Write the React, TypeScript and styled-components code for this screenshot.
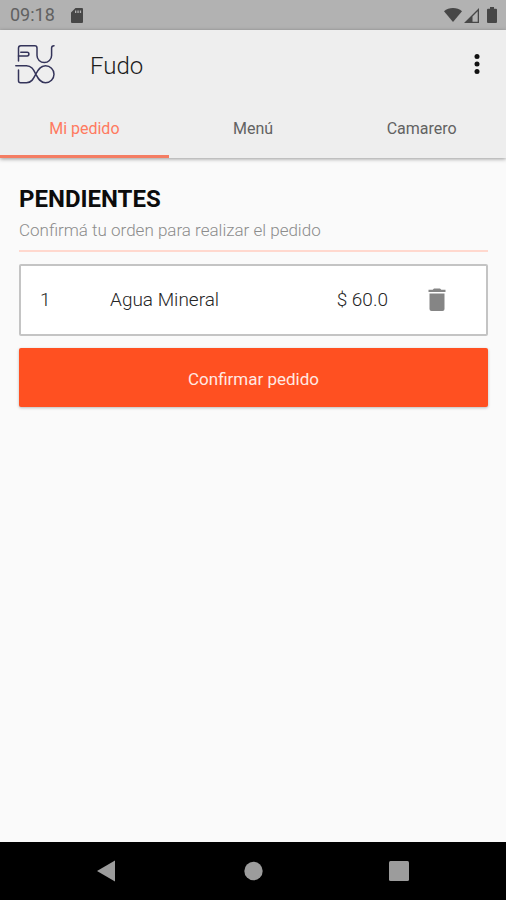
import React from 'react';
import styled, { createGlobalStyle, css } from 'styled-components';

type Tab = {
  id: string;
  label: string;
};

type OrderItem = {
  quantity: number;
  name: string;
  price: string;
};

const tabs: Tab[] = [
  { id: 'pedido', label: 'Mi pedido' },
  { id: 'menu', label: 'Menú' },
  { id: 'camarero', label: 'Camarero' },
];

const pendingItems: OrderItem[] = [
  { quantity: 1, name: 'Agua Mineral', price: '$ 60.0' },
];

// Icons
function SdCardIcon() {
  return (
    <svg width="12" height="15" viewBox="0 0 12 15" aria-hidden="true">
      <path
        fillRule="evenodd"
        fill="#474747"
        d="M4.5 0H11a1 1 0 0 1 1 1v13a1 1 0 0 1-1 1H1a1 1 0 0 1-1-1V4.5zM4 2.500v2.500h1.300v-2.500zM6.400 2.500v2.500h1.300v-2.500zM8.800 2.500v2.500h1.300v-2.500z"
      />
    </svg>
  );
}

function WifiIcon() {
  return (
    <svg width="18" height="14" viewBox="0 0 18 14" aria-hidden="true">
      <path fill="#474747" d="M9 14 0 3.2C2.500 1.100 5.600 0 9 0s6.500 1.100 9 3.200z" />
    </svg>
  );
}

function SignalIcon() {
  return (
    <svg width="15" height="15" viewBox="0 0 15 15" aria-hidden="true">
      <path fill="#474747" d="M0 15 15 0v15zM8.500 8.500v5.200h5.200V3.300z" fillRule="evenodd" />
    </svg>
  );
}

function BatteryIcon() {
  return (
    <svg width="10" height="16" viewBox="0 0 10 16" aria-hidden="true">
      <path
        fill="#474747"
        d="M3 0h4v1.700h2a1 1 0 0 1 1 1V15a1 1 0 0 1-1 1H1a1 1 0 0 1-1-1V2.700a1 1 0 0 1 1-1h2z"
      />
    </svg>
  );
}

function FudoLogo() {
  return (
    <svg width="40" height="40" viewBox="0 0 40 40" role="img" aria-label="Fudo">
      <g fill="none" stroke="#34345a" strokeWidth="1.500" strokeLinecap="round">
        <path d="M3.500 17V4q0-2.300 2.300-2.300h14q2.200 0 2.200 2.200v7.600a7.300 7 0 0 0 14.600 0V4q0-2.300 2.400-2.300" />
        <path d="M3.500 12h8.700q1.700 0 1.700-1.900t-1.700-1.900H5.800" />
        <path d="M.8 21.700H11.500c5.500 0 7.300 4.800 9.300 8.500s4.200 8.500 9.700 8.500a8.500 8.500 0 0 0 0-17c-5.500 0-7.700 4.800-9.700 8.500S17 38.700 11.500 38.700H5.500q-2 0-2-2V26" />
      </g>
    </svg>
  );
}

function MoreIcon() {
  return (
    <svg width="6" height="22" viewBox="0 0 6 22" fill="#111" aria-hidden="true">
      <circle cx="3" cy="3.500" r="2.500" />
      <circle cx="3" cy="11" r="2.500" />
      <circle cx="3" cy="18.500" r="2.500" />
    </svg>
  );
}

function TrashIcon() {
  return (
    <svg width="18" height="24" viewBox="0 0 18 24" fill="#858585" aria-hidden="true">
      <path d="M.5 1.700h4.200L6 .5h6l1.300 1.200h4.200V4H.5z" />
      <path d="M1.500 5.500h15V21a2 2 0 0 1-2 2h-11a2 2 0 0 1-2-2z" />
    </svg>
  );
}

function BackIcon() {
  return (
    <svg width="20" height="22" viewBox="0 0 20 22" aria-hidden="true">
      <path fill="#9c9c9c" d="M18 .5v21L0 11z" />
    </svg>
  );
}

function HomeIcon() {
  return (
    <svg width="20" height="20" viewBox="0 0 20 20" aria-hidden="true">
      <circle cx="10.500" cy="10" r="9.200" fill="#9c9c9c" />
    </svg>
  );
}

function RecentIcon() {
  return (
    <svg width="20" height="20" viewBox="0 0 20 20" aria-hidden="true">
      <rect width="20" height="20" rx="1.500" fill="#9c9c9c" />
    </svg>
  );
}

// Component
function App() {
  const [activeTab, setActiveTab] = React.useState('pedido');

  return (
    <>
      <GlobalStyle />
      <StyledScreen>
        <StyledStatusBar>
          <StyledClock>09:18</StyledClock>
          <SdCardIcon />
          <StyledStatusIcons>
            <WifiIcon />
            <SignalIcon />
            <BatteryIcon />
          </StyledStatusIcons>
        </StyledStatusBar>

        <StyledHeader>
          <StyledToolbar>
            <FudoLogo />
            <StyledTitle>Fudo</StyledTitle>
            <StyledIconButton type="button" aria-label="Más opciones">
              <MoreIcon />
            </StyledIconButton>
          </StyledToolbar>
          <StyledTabs role="tablist">
            {tabs.map(({ id, label }) => (
              <StyledTab
                key={id}
                type="button"
                role="tab"
                aria-selected={id === activeTab}
                $active={id === activeTab}
                onClick={() => setActiveTab(id)}
              >
                {label}
              </StyledTab>
            ))}
          </StyledTabs>
        </StyledHeader>

        <StyledMain>
          <StyledHeading>PENDIENTES</StyledHeading>
          <StyledHint>Confirmá tu orden para realizar el pedido</StyledHint>
          <StyledList>
            {pendingItems.map(({ quantity, name, price }) => (
              <StyledItem key={name}>
                <StyledQuantity>{quantity}</StyledQuantity>
                <StyledName>{name}</StyledName>
                <span>{price}</span>
                <StyledIconButton type="button" aria-label={`Eliminar ${name}`}>
                  <TrashIcon />
                </StyledIconButton>
              </StyledItem>
            ))}
          </StyledList>
          <StyledConfirm type="button">Confirmar pedido</StyledConfirm>
        </StyledMain>

        <StyledNavBar aria-label="Sistema">
          <StyledNavButton type="button" aria-label="Atrás">
            <BackIcon />
          </StyledNavButton>
          <StyledNavButton type="button" aria-label="Inicio">
            <HomeIcon />
          </StyledNavButton>
          <StyledNavButton type="button" aria-label="Recientes">
            <RecentIcon />
          </StyledNavButton>
        </StyledNavBar>
      </StyledScreen>
    </>
  );
}

// Styled components
const GlobalStyle = createGlobalStyle`
  *,
  *::before,
  *::after {
    box-sizing: border-box;
  }

  body {
    margin: 0;
    background-color: #fafafa;
    font-family: Roboto, 'Liberation Sans', sans-serif;
  }

  h1, h2, p, ul {
    margin: 0;
    padding: 0;
  }

  svg {
    display: block;
    flex-shrink: 0;
  }
`;

const buttonReset = css`
  border: 0;
  padding: 0;
  background: none;
  font-family: inherit;
  cursor: pointer;
`;

const StyledScreen = styled.div`
  display: flex;
  flex-direction: column;
  min-height: 100vh;
`;

const StyledStatusBar = styled.div`
  display: flex;
  align-items: center;
  gap: 16px;
  height: 30px;
  padding-inline: 10px 9px;
  background-color: #b2b2b2;
`;

const StyledClock = styled.span`
  font-size: 18px;
  line-height: 20px;
  color: #616161;
`;

const StyledStatusIcons = styled.div`
  display: flex;
  align-items: center;
  gap: 2px;
  margin-inline-start: auto;

  & > :last-child {
    margin-inline-start: 6px;
  }
`;

const StyledHeader = styled.header`
  background-color: #eee;
  box-shadow: 0 1px 4px rgba(0, 0, 0, 0.4);
`;

const StyledToolbar = styled.div`
  display: flex;
  align-items: center;
  height: 68px;
  padding-inline: 15px 14px;
`;

const StyledTitle = styled.h1`
  flex: 1;
  margin-inline-start: 35px;
  padding-block-start: 4px;
  font-size: 24px;
  font-weight: 300;
  line-height: 28px;
  color: #1c1c1c;
`;

const StyledIconButton = styled.button`
  ${buttonReset};
  display: flex;
  align-items: center;
  justify-content: center;
  width: 30px;
  height: 40px;
`;

const StyledTabs = styled.div`
  display: flex;
`;

const StyledTab = styled.button<{ $active: boolean }>`
  ${buttonReset};
  flex: 1;
  height: 60px;
  padding-block-start: 2px;
  border-block: 3px solid transparent;
  border-block-end-color: ${({ $active }) => ($active ? '#f47d63' : 'transparent')};
  font-size: 16px;
  line-height: 20px;
  color: ${({ $active }) => ($active ? '#ff7a60' : '#626262')};
`;

const StyledMain = styled.main`
  flex: 1;
  display: flex;
  flex-direction: column;
  padding: 27px 18px 27px 19px;
`;

const StyledHeading = styled.h2`
  font-size: 24px;
  font-weight: 700;
  line-height: 28px;
  color: #0c0c0c;
`;

const StyledHint = styled.p`
  padding-block: 6px 9px;
  border-block-end: 2px solid #ffd8ce;
  font-size: 17px;
  font-weight: 300;
  line-height: 22px;
  color: #8c8c8c;
`;

const StyledList = styled.ul`
  display: flex;
  flex-direction: column;
  gap: 12px;
  padding-block: 12px;
  list-style: none;
`;

const StyledItem = styled.li`
  display: flex;
  align-items: center;
  height: 72px;
  padding-inline: 19px 34px;
  border: 2px solid #c4c4c4;
  border-radius: 2px;
  background-color: #fff;
  font-size: 19px;
  font-weight: 300;
  line-height: 24px;
  color: #262626;

  & > button {
    margin-inline-start: 34px;
  }
`;

const StyledQuantity = styled.span`
  width: 70px;
`;

const StyledName = styled.span`
  flex: 1;
`;

const StyledConfirm = styled.button`
  ${buttonReset};
  height: 59px;
  padding-block-start: 2px;
  border-radius: 2px;
  background-color: #ff5021;
  box-shadow: 0 1px 3px rgba(0, 0, 0, 0.25);
  font-size: 17px;
  line-height: 20px;
  color: #ffe9e3;
`;

const StyledNavBar = styled.nav`
  display: flex;
  justify-content: center;
  gap: 86px;
  height: 58px;
  background-color: #000;
`;

const StyledNavButton = styled.button`
  ${buttonReset};
  display: flex;
  align-items: center;
  justify-content: center;
  width: 60px;
`;

export default App;
